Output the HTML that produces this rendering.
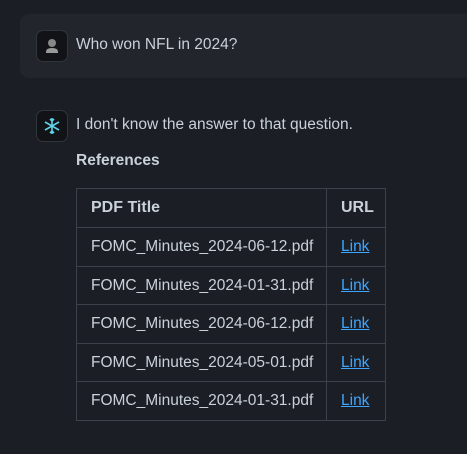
<!DOCTYPE html>
<html><head><style>
html,body{margin:0;padding:0;background:#1b1e24;width:467px;height:454px;overflow:hidden;font-family:"Liberation Sans",sans-serif;color:#c9d1d9}
.user{position:absolute;left:20px;top:14px;width:460px;height:64px;background:#22252c;border-radius:9px}
.av{position:absolute;width:30px;height:30px;border:1px solid #30343b;border-radius:7px;background:#111317}
.t{position:absolute;font-size:15.5px;white-space:nowrap}
table{position:absolute;left:76px;top:188px;border-collapse:collapse;font-size:15.5px;table-layout:fixed;width:309px}
td,th{border:1px solid #3d4149;padding:0 0 0 14px;text-align:left;box-sizing:border-box}
th{font-weight:bold;color:#c9d1d9;font-size:16px}
a{color:#3ea6ff;text-decoration:underline}
</style></head><body>
<div class="user"></div>
<div class="av" style="left:36px;top:30px"><svg width="30" height="30"><circle cx="15" cy="12" r="4" fill="#888"/><path d="M9 21 q0-4 6-4 q6 0 6 4 v1 h-12z" fill="#999"/></svg></div>
<div class="t" style="left:76px;top:36px">Who won NFL in 2024?</div>
<div class="av" style="left:36px;top:110px"><svg width="30" height="30" stroke="#5fd4ea" stroke-width="1.6" fill="none"><path d="M15 7v16M8 11l14 8M8 19l14-8M13 8l2 2 2-2M13 22l2-2 2 2"/></svg></div>
<div class="t" style="left:76px;top:116px">I don't know the answer to that question.</div>
<div class="t" style="left:76px;top:152px;font-weight:bold">References</div>
<table>
<colgroup><col style="width:250px"><col style="width:59px"></colgroup>
<tr style="height:39px"><th>PDF Title</th><th>URL</th></tr>
<tr style="height:39px"><td>FOMC_Minutes_2024-06-12.pdf</td><td><a>Link</a></td></tr>
<tr style="height:38px"><td>FOMC_Minutes_2024-01-31.pdf</td><td><a>Link</a></td></tr>
<tr style="height:39px"><td>FOMC_Minutes_2024-06-12.pdf</td><td><a>Link</a></td></tr>
<tr style="height:38px"><td>FOMC_Minutes_2024-05-01.pdf</td><td><a>Link</a></td></tr>
<tr style="height:39px"><td>FOMC_Minutes_2024-01-31.pdf</td><td><a>Link</a></td></tr>
</table>
</body></html>
